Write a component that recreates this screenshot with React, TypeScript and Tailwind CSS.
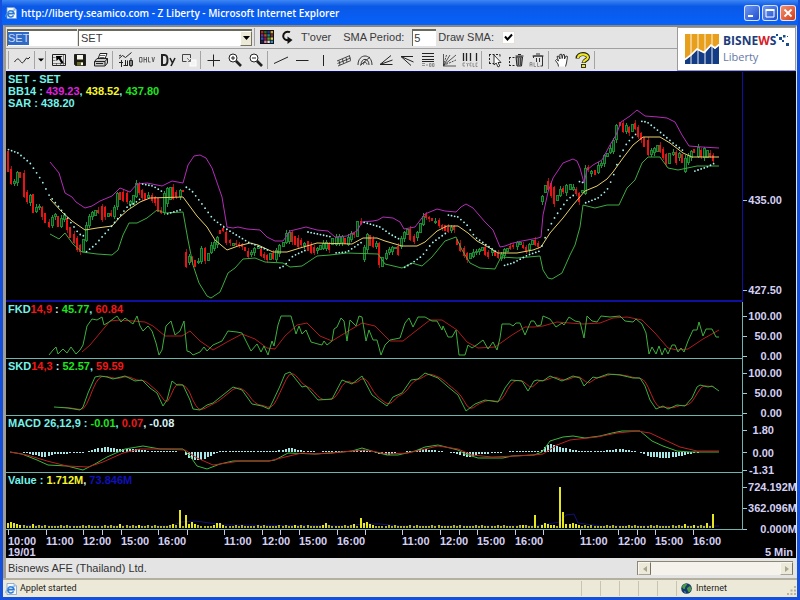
import { useState, type ReactNode } from "react";

type Point = [number, number];

type AxisLabel = { y: number; text: string };

type LegendPart = { text: string; tone: string };

const PLOT_LEFT = 6;
const PLOT_WIDTH = 736;
const BAR_START = 8.5;
const BAR_STEP = 3.12;
const BAR_COUNT = 227;

const CYAN = "text-[#74f2ea]";
const RED = "text-[#f01818]";
const GREEN = "text-[#1ee61e]";
const WHITE = "text-[#d8f4f4]";

// Each entry is direction + top-bottom of the candle body.
const CANDLES = `
r151-172 r169-184 g181-184 g172-183 r172-178 r173-197 r192-202 g195-203 r194-213 g207-212 g206-208 r207-217
r213-223 r222-227 g217-226 g214-217 r216-227 g218-227 g215-220 r218-230 r227-238 r234-243 r238-250 r245-252
g239-252 g225-241 g216-226 g212-217 g210-216 r210-213 r206-220 r207-217 g213-217 r213-216 g207-217 g193-207
r192-200 r192-201 r193-202 g201-205 g195-205 g183-197 r184-193 r190-198 r193-200 g195-198 r195-201 r197-203
r198-212 r210-213 g193-213 g188-204 g187-200 r187-199 r192-197 g190-197 r190-192 r252-267 g256-263 r257-262
r260-267 g261-263 g248-262 r248-261 g253-261 g245-253 g242-249 g237-245 r230-234 r228-231 r232-243 r240-243
g243-246 r243-245 r244-246 r244-247 r247-251 r251-257 g252-255 g248-253 g246-249 r249-256 r254-258 r255-260
g253-260 r253-259 g250-260 g245-254 g242-247 g233-243 g232-242 r232-242 r236-245 r238-247 r240-245 g243-246
r241-251 r245-253 r247-253 g248-251 g245-250 g243-249 g242-249 r243-250 g238-245 g237-245 g236-244 g236-243
r238-244 g237-245 g233-240 r233-235 g221-237 r221-224 g247-260 g234-250 r235-246 r239-247 g243-247 r243-265
g257-267 g253-259 g249-253 g247-252 g247-249 r246-255 g238-247 g232-239 g229-235 r229-240 r236-242 g232-238
g223-233 g216-225 r214-218 r217-219 r218-221 g221-223 r220-226 r225-228 r225-231 r227-232 g227-231 r226-230
r239-245 r243-251 r248-256 r253-260 g253-259 g252-257 g251-253 g249-252 g247-251 r247-255 r252-257 g250-253
r251-256 r253-258 g254-259 g249-256 g248-252 r246-249 r245-247 g242-247 g242-245 r245-248 r247-252 g244-250
g240-245 r240-245 r243-247 g196-202 g185-193 r181-190 r183-196 r187-204 g195-201 g189-196 r188-192 g185-193
g184-190 g187-190 r189-194 r193-202 g190-193 g168-194 r167-170 g171-174 r170-175 g165-173 g163-166 g155-164
g153-157 g148-153 g140-152 g125-140 r122-126 r123-132 g125-132 r127-133 g124-132 r123-129 r127-137 r133-140
r137-147 r140-155 g150-155 g148-153 g145-152 r145-152 r149-158 r154-164 g153-164 g152-155 r152-163 g153-158
r154-163 g158-172 g155-163 g151-158 r149-153 g147-157 r150-157 g148-158 g150-158 r153-157 r155-161`;

const UPPER_BAND =
  "50,162 59,173 65,193 72,197 76,202 85,208 92,206 100,201 112,196 120,188 130,192 137,184 147,183 162,186 172,181 183,183 188,165 194,156 200,155 206,158 212,168 222,197 227,227 233,228 238,227 247,229 260,230 267,237 275,241 283,241 290,231 306,227 317,230 328,231 335,237 347,236 357,231 362,222 373,221 378,220 383,217 393,218 400,222 404,229 415,227 425,214 437,209 445,211 456,212 461,207 466,204 473,208 485,222 493,230 500,247 505,246 513,243 522,241 538,238 541,237 543,215 548,192 553,178 563,163 573,159 577,161 580,168 584,183 587,170 593,165 602,160 610,145 616,135 621,122 630,116 637,110 645,116 658,117 667,118 675,122 682,135 689,146 702,147 719,148";
const MIDDLE_BAND =
  "50,199 62,212 72,221 85,230 97,228 112,226 120,217 128,210 140,202 150,198 183,197 197,216 207,227 215,240 227,250 238,246 250,243 258,245 273,252 287,252 300,248 317,243 352,244 363,238 377,238 385,241 402,246 417,246 425,242 437,231 447,226 458,226 468,233 477,241 488,247 498,253 517,253 533,250 541,247 550,233 563,218 573,205 585,191 597,186 607,179 613,172 623,158 633,145 643,137 660,137 670,143 683,153 692,157 719,157";
const LOWER_BAND =
  "50,234 59,239 65,233 73,244 82,252 97,254 112,255 118,250 123,235 129,223 137,223 147,218 157,210 165,213 183,212 188,240 193,265 199,283 207,296 211,298 220,292 223,285 228,273 235,268 243,259 255,258 265,262 283,263 290,267 302,266 317,256 330,255 347,253 378,254 385,264 402,268 412,263 422,266 432,257 445,241 456,237 462,250 470,263 480,268 495,269 501,257 517,258 540,256 543,270 548,278 552,279 562,273 570,255 575,245 580,227 583,205 595,208 607,205 619,205 627,188 635,180 642,163 648,157 660,157 668,168 678,170 697,166 719,166";

const SAR_RUNS = [
  "7,149 18,153 30,163 42,181 49,195 67,217 79,234 84,236",
  "86,252 95,245 110,228 120,216 128,206 135,203 140,199",
  "142,184 153,186 163,192",
  "167,214 183,209",
  "186,187 192,191 202,204 213,219 228,230 248,242 270,251",
  "277,269 284,266 293,256 306,250",
  "308,232 332,237",
  "333,253 347,252 362,242",
  "363,222 380,227 390,234 399,239",
  "402,269 412,263 422,256 432,243 446,233",
  "448,215 458,217 467,225 475,237 485,244 498,253",
  "502,266 513,263 528,255 540,251",
  "542,246 545,238 549,228 555,217 562,207 568,199 574,195",
  "577,181 585,183",
  "585,203 598,198 607,190 613,177 619,158 627,143 637,133",
  "639,121 647,122 660,132 673,143 685,152",
  "692,172 707,167 719,161",
];

const FKD_FAST =
  "49,355 53,350 56,347 58,354 63,349 67,353 71,347 76,354 80,350 83,345 87,326 92,319 97,320 102,317 104,325 109,322 117,316 121,322 125,318 133,324 137,316 140,326 143,331 148,326 152,331 156,343 159,355 162,350 166,326 171,321 175,335 180,331 184,321 187,351 190,352 193,355 200,352 204,347 207,351 213,345 222,341 228,331 237,332 242,333 247,343 251,351 257,344 261,352 264,346 268,355 272,341 274,346 278,325 281,316 291,316 296,334 299,326 302,334 306,330 311,342 318,344 322,345 324,341 327,345 332,341 334,329 337,327 341,318 344,321 347,341 350,320 356,326 359,316 362,317 366,341 369,330 373,340 377,340 381,355 385,345 390,340 400,338 405,323 409,318 413,327 418,317 425,317 432,321 437,321 442,330 443,326 448,337 452,337 456,330 459,355 465,355 468,345 472,348 478,344 483,340 488,349 493,342 497,350 500,338 502,324 510,324 513,326 516,323 520,323 525,335 531,321 534,321 537,326 541,325 543,316 550,319 556,327 562,323 564,325 569,317 575,321 580,322 584,338 587,316 592,321 597,322 601,316 610,317 620,316 625,321 633,322 636,319 642,324 646,333 649,354 652,347 656,354 659,346 662,355 665,348 668,354 672,345 675,345 678,352 681,348 684,352 688,341 693,330 697,330 699,322 703,336 706,329 712,329 716,337 719,337";
const FKD_SLOW =
  "82,352 90,345 100,333 110,321 120,320 133,321 145,322 153,326 165,336 182,336 190,331 200,341 213,350 227,342 242,334 255,339 267,348 275,349 285,336 297,325 307,323 320,336 332,341 345,333 362,323 375,326 390,341 403,341 417,330 430,320 442,320 457,330 467,342 478,348 495,347 512,335 525,327 534,327 543,326 557,322 583,324 600,323 613,318 627,317 642,320 655,333 668,348 677,350 688,349 703,339 719,330";
const SKD_FAST =
  "54,407 68,408 80,410 83,407 88,393 95,377 100,376 107,377 113,379 125,376 135,381 142,380 150,388 157,393 163,406 167,400 172,381 177,385 183,385 190,400 193,409 200,410 207,405 213,403 223,395 233,387 242,390 252,404 262,406 269,409 273,401 280,386 285,374 290,372 302,387 306,386 318,400 332,399 342,380 352,384 362,376 372,395 380,401 387,406 393,397 402,393 411,380 418,379 425,373 438,378 447,386 458,395 466,411 475,404 485,400 498,402 505,388 511,380 522,381 528,391 534,381 537,380 543,381 550,376 562,381 573,376 580,378 584,386 593,377 597,378 608,374 620,375 633,378 640,378 645,386 650,400 656,409 663,406 668,409 677,405 685,406 692,398 697,387 700,385 708,387 712,386 719,391";
const MACD_FAST =
  "10,452 22,454 37,460 48,465 67,466 83,470 95,464 107,457 125,449 143,446 160,449 183,449 190,456 197,466 207,469 220,464 233,461 269,461 275,460 288,453 315,454 332,453 352,451 362,448 375,452 387,455 398,455 415,451 425,447 438,445 458,450 465,454 478,458 503,458 512,456 534,455 542,452 550,441 563,437 573,436 585,438 600,436 612,433 622,431 640,431 652,441 663,446 677,451 690,452 719,452";
const MACD_SIGNAL =
  "10,452 27,455 47,461 67,466 88,467 103,462 123,453 140,449 160,449 185,450 197,458 213,465 227,463 240,461 269,461 285,457 302,453 315,454 342,452 365,450 388,454 408,453 425,449 438,446 458,449 472,455 492,457 515,456 534,455 543,454 557,445 570,440 597,437 617,433 637,431 650,433 667,441 680,447 697,451 719,451";
// x, height above (+) or below (-) the zero line
const MACD_HISTOGRAM =
  "20,0 30,-2 45,-5 55,-2 84,-1 88,1 105,5 120,3 140,3 150,1 170,1 184,0 188,-5 197,-9 207,-6 215,-2 222,1 262,1 275,1 283,2 291,4 298,2 310,1 318,0 330,1 350,1 365,2 372,0 387,-3 400,0 415,1 422,3 435,2 445,0 455,-1 466,-5 472,-5 480,-2 498,-1 508,0 515,1 541,1 546,6 552,8 560,5 570,3 580,1 600,1 620,3 635,1 643,-1 650,-5 668,-6 680,-4 695,-1 705,0 719,0";
const MACD_ZERO = 452;

const VALUE_BASE = 528;
const VALUE_AVERAGE =
  "8,525 50,526 170,526 182,522 195,521 210,523 225,525 350,526 362,524 380,524 400,526 535,526 560,522 566,515 574,514 578,523 600,526 719,526";
// bar index -> height
const VALUE_SPIKES: Record<number, number> = {
  0: 5, 1: 6, 2: 5, 3: 4, 4: 3, 8: 4, 36: 4, 42: 3, 53: 4, 55: 18, 57: 13, 58: 4, 59: 6, 60: 4, 66: 3, 67: 5,
  68: 5, 69: 3, 92: 3, 101: 3, 102: 5, 111: 4, 113: 10, 114: 5, 115: 6, 116: 4, 117: 3, 165: 3, 169: 13, 171: 3,
  172: 5, 173: 4, 174: 3, 175: 3, 177: 41, 178: 16, 179: 4, 180: 4, 181: 5, 182: 4, 183: 3, 217: 4, 220: 3,
  224: 5, 226: 14,
};

const TIME_TICKS: { x: number; text?: string }[] = [
  { x: 8, text: "10:00" },
  { x: 46, text: "11:00" },
  { x: 83, text: "12:00" },
  { x: 102 },
  { x: 121, text: "15:00" },
  { x: 158, text: "16:00" },
  { x: 187 },
  { x: 224, text: "11:00" },
  { x: 262, text: "12:00" },
  { x: 280 },
  { x: 299, text: "15:00" },
  { x: 337, text: "16:00" },
  { x: 365 },
  { x: 402, text: "11:00" },
  { x: 440, text: "12:00" },
  { x: 459 },
  { x: 477, text: "15:00" },
  { x: 515, text: "16:00" },
  { x: 543 },
  { x: 580, text: "11:00" },
  { x: 618, text: "12:00" },
  { x: 637 },
  { x: 655, text: "15:00" },
  { x: 693, text: "16:00" },
];

const BARS = Array.from({ length: BAR_COUNT }, (_, i) => BAR_START + i * BAR_STEP);

function parsePoints(points: string): Point[] {
  return points.split(" ").map((pair) => pair.split(",").map(Number) as Point);
}

// Linear interpolation along a polyline; null outside of its range.
function valueAt(points: Point[], x: number): number | null {
  for (let i = 1; i < points.length; i++) {
    const [x0, y0] = points[i - 1];
    const [x1, y1] = points[i];
    if (x >= x0 && x <= x1) return y0 + ((y1 - y0) * (x - x0)) / (x1 - x0);
  }
  return null;
}

// Three bar average of a line, sampled on every bar.
function smooth(points: string): string {
  const source = parsePoints(points);
  const out: string[] = [];
  BARS.forEach((x) => {
    const window = [x, x - BAR_STEP, x - BAR_STEP * 2].map((wx) => valueAt(source, wx));
    if (window.some((v) => v === null)) return;
    const sum = (window as number[]).reduce((a, b) => a + b, 0);
    out.push(`${x.toFixed(1)},${(sum / 3).toFixed(1)}`);
  });
  return out.join(" ");
}

function Line({ points, color }: { points: string; color: string }) {
  return (
    <polyline points={points} fill="none" stroke={color} strokeWidth="1" vectorEffect="non-scaling-stroke" />
  );
}

function Candles() {
  return (
    <g shapeRendering="crispEdges">
      {CANDLES.trim()
        .split(/\s+/)
        .map((entry, i) => {
          const up = entry[0] === "g";
          const [top, bottom] = entry.slice(1).split("-").map(Number);
          const x = Math.floor(BARS[i]);
          const wickTop = top - ((i * 7) % 4);
          const wickBottom = bottom + ((i * 5) % 4);
          return (
            <g key={i}>
              <rect x={x} y={wickTop} width="1" height={wickBottom - wickTop} fill={up ? "#1f9a3a" : "#a01414"} />
              {up ? (
                <>
                  <rect x={x - 1} y={top} width="3" height={bottom - top} fill="#1c8a34" />
                  <rect x={x} y={top + 1} width="1" height={Math.max(0, bottom - top - 2)} fill="#063a10" />
                </>
              ) : (
                <rect x={x - 1} y={top} width="2" height={bottom - top} fill="#e81414" />
              )}
            </g>
          );
        })}
    </g>
  );
}

function SarDots() {
  return (
    <g fill="#a8f4f0">
      {SAR_RUNS.map((run, r) => {
        const points = parsePoints(run);
        return BARS.map((x, i) => {
          const y = valueAt(points, x);
          return y === null ? null : <circle key={`${r}-${i}`} cx={x} cy={y} r="0.9" />;
        });
      })}
    </g>
  );
}

function Histogram() {
  const points = parsePoints(MACD_HISTOGRAM);
  return (
    <g fill="#a4e6e6" shapeRendering="crispEdges">
      {BARS.map((x, i) => {
        const h = valueAt(points, x);
        if (h === null || Math.abs(h) < 0.4) return null;
        const size = Math.max(1, Math.round(Math.abs(h)));
        return <rect key={i} x={Math.floor(x) - 1} width="2" y={h > 0 ? MACD_ZERO - size : MACD_ZERO} height={size} />;
      })}
    </g>
  );
}

function ValueBars() {
  return (
    <g shapeRendering="crispEdges">
      {BARS.map((x, i) => {
        const spike = VALUE_SPIKES[i];
        const h = spike ?? ((i * 11) % 7 > 4 ? 3 : 2);
        return (
          <rect
            key={i}
            x={Math.floor(x) - 1}
            y={VALUE_BASE - h}
            width="2"
            height={h}
            fill={spike ? "#e6e61e" : "#b4b428"}
          />
        );
      })}
    </g>
  );
}

type PanelProps = {
  top: number;
  height: number;
  border: number;
  className: string;
  frame: string;
  legend: LegendPart[][];
  axis: AxisLabel[];
  axisEdge: string;
  children: ReactNode;
};

function Panel({ top, height, border, className, frame, legend, axis, axisEdge, children }: PanelProps) {
  return (
    <section className={`flex ${className}`}>
      <div className={`relative flex-1 ${frame}`}>
        <svg
          className="absolute inset-0 h-full w-full"
          viewBox={`${PLOT_LEFT} ${top} ${PLOT_WIDTH} ${height - border}`}
          preserveAspectRatio="none"
          aria-hidden="true"
        >
          {children}
        </svg>
        <div className="relative px-[2px] pt-px">
          {legend.map((row, i) => (
            <p key={i} className="leading-3 whitespace-pre">
              {row.map((part, j) => (
                <span key={j} className={part.tone}>
                  {part.text}
                </span>
              ))}
            </p>
          ))}
        </div>
      </div>
      <div className="relative w-[53px]">
        {axis.map(({ y, text }) => (
          <div
            key={text}
            className="absolute inset-x-0 flex h-3 -translate-y-1/2 items-center overflow-x-clip leading-3"
            style={{ top: `${((y - top) / height) * 100}%` }}
          >
            <span className="h-px w-1 bg-[#9fc8d8]" />
            <span className={`absolute ${axisEdge}`}>{text}</span>
          </div>
        ))}
      </div>
    </section>
  );
}

function Chart() {
  const tealFrame = "border-r border-b border-[#6fb4ac]";
  return (
    <div className="flex flex-1 flex-col bg-black font-['Liberation_Sans',Arial,sans-serif] text-[11px] font-bold text-[#d4d0f4]">
      <Panel
        top={72}
        height={230}
        border={2}
        className="min-h-[230px] flex-1"
        frame="border-r border-b-2 border-[#1010a0]"
        axisEdge="right-[14px]"
        axis={[
          { y: 200, text: "435.00" },
          { y: 290, text: "427.50" },
        ]}
        legend={[
          [{ text: "SET - SET", tone: CYAN }],
          [
            { text: "BB14 : ", tone: CYAN },
            { text: "439.23", tone: "text-[#e020e0]" },
            { text: ", ", tone: CYAN },
            { text: "438.52", tone: "text-[#f6f62a]" },
            { text: ", ", tone: CYAN },
            { text: "437.80", tone: GREEN },
          ],
          [{ text: "SAR : 438.20", tone: CYAN }],
        ]}
      >
        <Candles />
        <Line points={UPPER_BAND} color="#b42cb8" />
        <Line points={MIDDLE_BAND} color="#e8d068" />
        <Line points={LOWER_BAND} color="#3cac40" />
        <SarDots />
      </Panel>
      <Panel
        top={302}
        height={57}
        border={1}
        className="h-[57px]"
        frame={tealFrame}
        axisEdge="right-[14px]"
        axis={[
          { y: 316, text: "100.00" },
          { y: 336, text: "50.00" },
          { y: 356, text: "0.00" },
        ]}
        legend={[
          [
            { text: "FKD", tone: CYAN },
            { text: "14,9", tone: RED },
            { text: " : ", tone: WHITE },
            { text: "45.77", tone: GREEN },
            { text: ", ", tone: CYAN },
            { text: "60.84", tone: RED },
          ],
        ]}
      >
        <Line points={FKD_SLOW} color="#b01c1c" />
        <Line points={FKD_FAST} color="#3cb03c" />
      </Panel>
      <Panel
        top={359}
        height={57}
        border={1}
        className="h-[57px]"
        frame={tealFrame}
        axisEdge="right-[14px]"
        axis={[
          { y: 373, text: "100.00" },
          { y: 393, text: "50.00" },
          { y: 413, text: "0.00" },
        ]}
        legend={[
          [
            { text: "SKD", tone: CYAN },
            { text: "14,3", tone: RED },
            { text: " : ", tone: WHITE },
            { text: "52.57", tone: GREEN },
            { text: ", ", tone: CYAN },
            { text: "59.59", tone: RED },
          ],
        ]}
      >
        <Line points={smooth(SKD_FAST)} color="#c02020" />
        <Line points={SKD_FAST} color="#3cb03c" />
      </Panel>
      <Panel
        top={416}
        height={57}
        border={1}
        className="h-[57px]"
        frame={tealFrame}
        axisEdge="right-[22px]"
        axis={[
          { y: 430, text: "1.80" },
          { y: 453, text: "0.00" },
          { y: 470, text: "-1.31" },
        ]}
        legend={[
          [
            { text: "MACD 26,12,9 : ", tone: CYAN },
            { text: "-0.01", tone: GREEN },
            { text: ", ", tone: CYAN },
            { text: "0.07", tone: RED },
            { text: ", -0.08", tone: WHITE },
          ],
        ]}
      >
        <Histogram />
        <Line points={MACD_FAST} color="#3cb83c" />
        <Line points={MACD_SIGNAL} color="#c02020" />
      </Panel>
      <Panel
        top={473}
        height={57}
        border={1}
        className="h-[57px]"
        frame={tealFrame}
        axisEdge="-right-px"
        axis={[
          { y: 487, text: "724.192M" },
          { y: 508, text: "362.096M" },
          { y: 529, text: "0.000M" },
        ]}
        legend={[
          [
            { text: "Value : ", tone: CYAN },
            { text: "1.712M", tone: "text-[#f6f62a]" },
            { text: ", ", tone: WHITE },
            { text: "73.846M", tone: "text-[#1010b8]" },
          ],
        ]}
      >
        <Line points={VALUE_AVERAGE} color="#10107a" />
        <ValueBars />
      </Panel>
      <div className="flex h-7">
        <div className="relative flex-1">
          {TIME_TICKS.map(({ x, text }) => (
            <div key={x} className="absolute top-0" style={{ left: `${((x - PLOT_LEFT) / (PLOT_WIDTH + 1)) * 100}%` }}>
              <span className="block h-[5px] w-px bg-[#c8c8e8]" />
              {text && <span className="block leading-3">{text}</span>}
            </div>
          ))}
          <span className="absolute bottom-0 left-[2px] leading-3">19/01</span>
        </div>
        <span className="flex w-[53px] items-end justify-end pr-[3px] leading-3 whitespace-nowrap">5 Min</span>
      </div>
    </div>
  );
}

function PageIcon() {
  return (
    <svg className="h-3 w-3 shrink-0" viewBox="0 0 12 12" aria-hidden="true">
      <path d="M2 0.5h7l2.5 2.5v8.5H2z" fill="#f4f8ff" stroke="#7f9dc8" strokeWidth="0.8" />
      <path d="M9 0.5V3h2.5" fill="#c4d6f0" stroke="#7f9dc8" strokeWidth="0.6" />
      <path d="M8.6 8.4A3.1 3.1 0 1 1 9 6.6H3.2" fill="none" stroke="#2a78d4" strokeWidth="1.6" />
      <path d="M0.6 9.8C0.4 6.6 5.6 2.6 9.6 3.4" fill="none" stroke="#5aa8ec" strokeWidth="0.8" />
    </svg>
  );
}

function TitleBar() {
  return (
    <header className="flex h-[25px] items-center gap-1 bg-linear-to-b from-[#3c86f4] via-[#0a58e6] via-25% to-[#0662fa] pr-[2px] pl-[3px]">
      <PageIcon />
      <h1 className="flex-1 truncate pt-px font-['Open_Sans',Tahoma,sans-serif] text-[10px] leading-4 font-semibold text-white">
        http://liberty.seamico.com - Z Liberty - Microsoft Internet Explorer
      </h1>
      <div className="flex gap-[2px] pt-px">
        <button type="button" aria-label="Minimize" className="h-4 w-4 rounded-[3px] border border-white/80 bg-linear-to-br from-[#6e96f0] to-[#1e4cd0]">
          <svg viewBox="0 0 14 14" className="h-full w-full">
            <rect x="3" y="9" width="5" height="2" fill="#fff" />
          </svg>
        </button>
        <button type="button" aria-label="Maximize" className="h-4 w-4 rounded-[3px] border border-white/80 bg-linear-to-br from-[#6e96f0] to-[#1e4cd0]">
          <svg viewBox="0 0 14 14" className="h-full w-full">
            <path d="M3 4.5h8v6.5H3z" fill="none" stroke="#fff" />
            <rect x="2.5" y="3" width="9" height="2" fill="#fff" />
          </svg>
        </button>
        <button type="button" aria-label="Close" className="h-4 w-4 rounded-[3px] border border-white/80 bg-linear-to-br from-[#f09070] to-[#d03810]">
          <svg viewBox="0 0 14 14" className="h-full w-full">
            <path d="M3.5 3.5l7 7M10.5 3.5l-7 7" stroke="#fff" strokeWidth="1.8" />
          </svg>
        </button>
      </div>
    </header>
  );
}

const PALETTE = [
  "#c02020", "#207020", "#2030b0", "#d0a020",
  "#7030a0", "#c05020", "#109090", "#803030",
  "#3050c0", "#a01060", "#60a030", "#e0d040",
  "#202060", "#e080a0", "#e0e0e0", "#3090d0",
];

function QuoteBar() {
  const [symbol, setSymbol] = useState("SET");
  const [period, setPeriod] = useState("5");
  const [drawSma, setDrawSma] = useState(true);

  return (
    <form className="flex h-[22px] items-center border-b border-[#a0a0a0] pb-px pl-px text-[11px] text-[#3a3a3a]">
      <div className="flex h-[17px] w-[70px] items-center border-t-2 border-l border-[#6a6a5c] bg-white">
        <input
          aria-label="Symbol"
          value={symbol}
          onChange={(e) => setSymbol(e.target.value)}
          className="h-[13px] field-sizing-content bg-[#316ac5] text-[11px] leading-3 text-[#c8dcff] outline-none"
        />
      </div>
      <div className="relative ml-px h-[17px] w-[174px] border-t-2 border-l border-[#6a6a5c] bg-white">
        <select aria-label="Market" className="block h-full w-full appearance-none bg-transparent pl-[2px] text-[11px] leading-3 outline-none">
          <option>SET</option>
        </select>
        <span className="pointer-events-none absolute inset-y-0 right-0 flex w-3 items-center justify-center border border-t-[#fff] border-r-[#77735f] border-b-[#77735f] border-l-[#fff] bg-[#ece9d8]">
          <svg viewBox="0 0 7 4" className="h-1 w-[7px]">
            <path d="M0 0h7L3.5 4z" fill="#000" />
          </svg>
        </span>
      </div>
      <span className="ml-[2px] h-[18px] w-px bg-[#a0a0a0]" />
      <button type="button" aria-label="Colours" className="ml-[2px] flex h-5 w-5 items-center justify-center">
        <svg viewBox="0 0 14 14" className="h-[14px] w-[14px]">
          <rect width="14" height="14" fill="#111" />
          {PALETTE.map((color, i) => (
            <rect key={i} x={1 + (i % 4) * 3.2} y={1 + Math.floor(i / 4) * 3.2} width="2.4" height="2.4" fill={color} />
          ))}
        </svg>
      </button>
      <button type="button" aria-label="Reload" className="flex h-5 w-5 items-center justify-center">
        <svg viewBox="0 0 14 14" className="h-[14px] w-[14px]">
          <path d="M10 2.2C6.500 0.600 3.200 2.800 3.200 6c0 2.800 2.200 4.400 5.800 4.200" fill="none" stroke="#111" strokeWidth="2" />
          <path d="M7.500 6.500L12.500 10l-5 4z" fill="#111" />
        </svg>
      </button>
      <span className="ml-1">T&apos;over</span>
      <label htmlFor="period" className="ml-3">
        SMA Period:
      </label>
      <input
        id="period"
        value={period}
        onChange={(e) => setPeriod(e.target.value)}
        className="ml-2 h-[17px] w-6 border-t-2 border-l border-[#6a6a5c] bg-white pl-px text-[11px] leading-3 outline-none"
      />
      <label htmlFor="draw-sma" className="ml-[2px]">
        Draw SMA:
      </label>
      <span className="relative ml-2 h-[13px] w-[13px]">
        <input
          id="draw-sma"
          type="checkbox"
          checked={drawSma}
          onChange={(e) => setDrawSma(e.target.checked)}
          className="peer block h-full w-full appearance-none border border-[#e4e0d8] bg-white"
        />
        <svg viewBox="0 0 13 13" className="pointer-events-none absolute inset-0 hidden peer-checked:block">
          <path d="M3 5.5L5.5 8.5L10 3.5" fill="none" stroke="#000" strokeWidth="2" />
        </svg>
      </span>
    </form>
  );
}

type Tool = { name: string; icon: ReactNode };

const MAGNIFIER = (
  <>
    <circle cx="6" cy="6" r="4" fill="#fff" />
    <path d="M9 9l5 5" strokeWidth="2.6" />
  </>
);

const TOOL_GROUPS: Tool[][] = [
  [
    {
      name: "Pointer",
      icon: (
        <>
          <path d="M1.5 2.5h13v11h-13z" />
          <path d="M1.5 5.5h3M1.5 8.5h3M1.5 11.5h13M5.5 11v2.5M9.5 11v2.5M12.5 2.5v11" strokeWidth="0.5" />
          <path d="M5 4h6.5l-2 1.8 3 4.700-2 1.200-2.800-4.700L5.500 9z" fill="#000" stroke="none" />
        </>
      ),
    },
    {
      name: "Save",
      icon: (
        <>
          <path d="M2.5 2.5h11v11h-10l-1-1z" fill="#1c1c10" />
          <rect x="5" y="3" width="6" height="4.500" fill="#f4f4e8" stroke="none" />
          <rect x="5" y="10" width="6" height="3.500" fill="#6a6a2a" stroke="none" />
          <rect x="9" y="10.500" width="2" height="2.500" fill="#fff" stroke="none" />
        </>
      ),
    },
    {
      name: "Print",
      icon: (
        <>
          <path d="M5 7l2-5.500h7L12 7" fill="#fff" />
          <path d="M7 3.500h5M6.500 5.500h5" strokeWidth="0.7" />
          <path d="M1.500 9.500L4 6.500h10.500v4.500l-2.500 3H1.500z" fill="#c8c8c8" />
          <path d="M1.500 9.500H12v4M12 9.500l2.500-3M3 11.500h7" />
        </>
      ),
    },
  ],
  [
    {
      name: "Indicators",
      icon: (
        <>
          <path d="M1 6.500l3.500-3 3 2 6-5M1 4l2-1" />
          <path d="M1 10.500h4M3.500 8v7M7.500 8v6M9.500 14V8.500M11.500 8.500h3v5h-3zM5.500 13.500h4M13 6v9" />
        </>
      ),
    },
    {
      name: "OHLV",
      icon: (
        <path
          d="M0.500 5.500h2.500v4.500H0.500zM5 5v5.500M7.500 5v5.500M5 7.500h2.500M9.500 5v5h2M13 5l1.200 5 1.300-5"
          stroke="#555"
          strokeWidth="0.9"
        />
      ),
    },
    {
      name: "Daily",
      icon: (
        <>
          <path d="M2 3v10h2.500c4 0 4-10 0-10z" strokeWidth="2" />
          <path d="M10 6l2.500 5M15 6l-4 8" strokeWidth="1.600" />
        </>
      ),
    },
    {
      name: "Windows",
      icon: (
        <>
          <rect x="9" y="8" width="6" height="6" fill="#f4f4f4" stroke="#fff" />
          <path d="M9.500 6V2.500h-8v7h4" stroke="#444" />
          <path d="M6 6l3.500 3.500M9.500 7V9.500H7" stroke="#777" />
        </>
      ),
    },
  ],
  [
    { name: "Crosshair", icon: <path d="M7.5 2.500v12M1.500 8.500h12.500" /> },
    {
      name: "Zoom in",
      icon: (
        <>
          {MAGNIFIER}
          <path d="M4 6h4M6 4v4" />
        </>
      ),
    },
    {
      name: "Zoom out",
      icon: (
        <>
          {MAGNIFIER}
          <path d="M4 6h4" />
        </>
      ),
    },
  ],
  [
    { name: "Trend line", icon: <path d="M1 11.500L15 5" /> },
    { name: "Horizontal line", icon: <path d="M2 8.500h12.500" /> },
    { name: "Vertical line", icon: <path d="M8.500 3v11" /> },
    {
      name: "Channel",
      icon: <path d="M1 9L14 3.500M2 14L15 8.500M1.500 11.500L14.500 6M3 8.500l1 4.500M6.500 7l1 4.500M10 5.500l1 4.500M13.500 4l1 4" strokeWidth="0.8" />,
    },
    {
      name: "Fibonacci arcs",
      icon: <path d="M1 13C1 1 15 1 15 13M4 13c0-7.500 8-7.500 8 0M6.500 12.500c0-3 3-3 3.500 0M3 13.500L13 5" strokeWidth="0.9" />,
    },
    { name: "Fan up", icon: <path d="M13 3.500L2 12.500h12.500M2 12.500L14.500 8" /> },
    { name: "Fan down", icon: <path d="M14 4.500H2L14.500 10M2 4.500L12 13.500" /> },
    {
      name: "Fibonacci retracement",
      icon: (
        <>
          <path d="M2 1.500h12M2 4.500h12M2 7.500h12M2 9.500h12" />
          <path d="M2 11.500h3M2 13.500h3M6 13h2M9.500 11.500h1.500v3H9.500zM12.500 11.500H14v3h-1.500z" stroke="#888" strokeWidth="0.9" />
        </>
      ),
    },
    {
      name: "Gann fan",
      icon: (
        <>
          <path d="M2.500 14V2M2 14h13M2.500 13.500L9 3M2.500 13.500L15 3" stroke="#555" />
          <path d="M2.500 13.500L5.500 3M2.500 13.500L15 8" strokeWidth="0.8" strokeDasharray="2 1" />
        </>
      ),
    },
    {
      name: "Cycle lines",
      icon: (
        <>
          <path d="M1.500 1v8M4.500 1v8M8.500 1v8M14.500 1v8" strokeWidth="1.300" />
          <path d="M3 11H1v3h2M4.500 11l1 1.500 1-1.500M5.500 12.500V14.500M9.500 11H8v3h1.500M11 11v3.500h1.500M15.500 11H14v3.500h1.500" stroke="#888" strokeWidth="0.9" />
        </>
      ),
    },
  ],
  [
    {
      name: "Select object",
      icon: (
        <>
          <path d="M2 2.500h11M2.500 2.500v9M2 11.500h5M13 2.500v3" strokeDasharray="2 1.500" />
          <path d="M7 3v10l2.200-2 1.800 4 1.800-1-1.800-3.500h3z" fill="#fff" strokeWidth="0.9" />
        </>
      ),
    },
    {
      name: "Delete object",
      icon: (
        <>
          <path d="M1 5.500h6M1.500 5.500v8M1 13.500h6" strokeDasharray="2 1.500" />
          <path d="M8 5h6.500l-1 9H9zM7.500 4h8M10 2.500h3" fill="#999" />
          <path d="M10.500 6v7M12.500 6v7" strokeWidth="0.7" />
        </>
      ),
    },
    {
      name: "Delete all",
      icon: (
        <>
          <path d="M4.500 6v-2h9v10h-2M3.500 4h11M7 2h4M7.500 6v4M10.500 6v4" stroke="#333" />
          <path d="M1 14.500v-4h2v4M1 12.500h2M5 10.500v4h2M8.500 10.500v4h2" stroke="#888" strokeWidth="0.9" />
        </>
      ),
    },
  ],
  [
    {
      name: "Pan",
      icon: (
        <path
          d="M4.500 14.500L4 12 1.500 8.500 2.500 7.500 4.500 9 3 4.500 4.500 4 6 7 5.800 2.500 7.500 2.200 8.200 6.500 9 2.500 10.500 2.800 10.500 7 12 4 13.500 4.500 12.500 11l-1 3.500"
          fill="#fff"
          strokeWidth="0.9"
        />
      ),
    },
    {
      name: "Help",
      icon: (
        <>
          <path d="M2.500 6.500C2.500 0.500 13.300 1 13 5.500c0 2.500-4.500 2.500-4.500 5.500" strokeWidth="4" stroke="#222" />
          <path d="M3 6C3 1 13.200 1.500 12.900 5.500c0 2.500-4.400 2.500-4.400 5" strokeWidth="2.200" stroke="#f0e81c" />
          <rect x="6.500" y="12.500" width="4" height="3" fill="#f0e81c" stroke="#222" strokeWidth="0.9" />
        </>
      ),
    },
  ],
];

function Separator() {
  return <span className="mr-[2px] ml-px h-[18px] w-px bg-[#a4a4a4]" />;
}

function Toolbar() {
  return (
    <div role="toolbar" aria-label="Chart tools" className="flex h-[22px] items-center pl-px">
      <Separator />
      <button type="button" aria-label="Chart style" className="flex h-5 w-[22px] items-center justify-center">
        <svg viewBox="0 0 16 16" className="h-4 w-4" fill="none" stroke="#222">
          <path d="M0.5 10c2-3 3.500-4 5-2s2.500 4 4 2l3-4 1.500 1 2-2" />
        </svg>
      </button>
      <Separator />
      <button type="button" aria-label="More chart styles" className="flex h-5 w-[7px] items-center justify-center">
        <svg viewBox="0 0 6 4" className="h-1 w-[6px]">
          <path d="M0 0.5h6L3 3.500z" fill="#000" />
        </svg>
      </button>
      {TOOL_GROUPS.map((group, i) => (
        <div key={i} className="flex items-center">
          <Separator />
          {group.map((tool) => (
            <button key={tool.name} type="button" aria-label={tool.name} className="flex h-5 w-[21px] items-center justify-center">
              <svg viewBox="0 0 16 16" className="h-4 w-4" fill="none" stroke="#222">
                {tool.icon}
              </svg>
            </button>
          ))}
        </div>
      ))}
      <Separator />
    </div>
  );
}

function Logo() {
  return (
    <div className="relative flex w-[119px] items-center gap-1 border border-[#9a9a9a] bg-white pl-[7px]">
      <svg viewBox="0 0 34 30" className="h-[30px] w-[34px] shrink-0" aria-hidden="true">
        <path d="M0 0h34v10l-4 3-4-2-6 7-8-2-6 7-6 4z" fill="#e8a01c" />
        <path d="M0 30v-4l6-4 6-6 8 3 6-7 4 3 4-3v18z" fill="#143c84" />
        <path d="M0 25.500L6 21l6-6 7 3.500L26 11l4 3 4-3.500" fill="none" stroke="#fff" strokeWidth="1.600" />
        <path d="M6 0v30M13 0v30M20 0v30M27 0v30" stroke="#fff" strokeWidth="0.9" />
      </svg>
      <div className="font-['Open_Sans',sans-serif]">
        <p className="text-[12px] leading-4 font-bold text-[#1c3c7c]">
          BISNE<span className="text-[#d82028]">W</span>S
        </p>
        <p className="text-[11px] leading-4 text-[#6478a8]">Liberty</p>
      </div>
      <svg viewBox="0 0 14 14" className="absolute top-[5px] right-[5px] h-[14px] w-[14px]" aria-hidden="true">
        <path d="M0 1h2v2H0zM3 4h3v3H3zM7 2h2.500v2.500H7zM6 7h2v2H6zM11 3h1v1h-1zM10 10h3v3h-3z" fill="#1c4c8c" />
      </svg>
    </div>
  );
}

function AppletFooter() {
  return (
    <div className="flex h-5 items-center justify-between bg-[#e4e4e4] pr-[3px] pl-[2px] text-[11px] text-[#333]">
      <p>Bisnews AFE (Thailand) Ltd.</p>
      <div className="flex h-[14px] w-[156px] border-t border-l border-[#8a8776] bg-[#f4f2ea]">
        <button type="button" aria-label="Scroll left" className="flex w-[13px] items-center justify-center border border-[#f8f6ee] border-r-[#77735f] border-b-[#a8a594] bg-[#ece9d8]">
          <svg viewBox="0 0 4 6" className="h-[6px] w-1">
            <path d="M4 0v6L0 3z" fill="#a8a594" />
          </svg>
        </button>
        <span className="flex-1" />
        <button type="button" aria-label="Scroll right" className="flex w-[13px] items-center justify-center border border-[#f8f6ee] border-r-[#77735f] border-b-[#a8a594] bg-[#ece9d8]">
          <svg viewBox="0 0 4 6" className="h-[6px] w-1">
            <path d="M0 0v6l4-3z" fill="#a8a594" />
          </svg>
        </button>
      </div>
    </div>
  );
}

function StatusBar() {
  return (
    <footer className="flex h-[17px] items-center bg-[#ece9d8] pl-[2px] font-['Roboto',Tahoma,sans-serif] text-[9px] text-[#222]">
      <PageIcon />
      <p className="ml-[3px] flex-1">Applet started</p>
      {[0, 1, 2, 3, 4].map((cell) => (
        <span key={cell} className="h-[15px] w-[19px] border-l border-[#c8c4b0]" />
      ))}
      <div className="flex h-[15px] w-[121px] items-center gap-1 border-l border-[#c8c4b0] pl-1">
        <svg viewBox="0 0 11 11" className="h-[11px] w-[11px]" aria-hidden="true">
          <circle cx="5.5" cy="5.5" r="5.3" fill="#14386c" />
          <path d="M1 4c1-3 4-3.500 5-3 0 2-2 2-2 4s-2 1-3-1zM6 5l3-2c2 3 1 5-1 6.500C7 8 6 7 6 5z" fill="#4c9c40" />
          <path d="M3 8l2 1-1 1z" fill="#6ab0e8" />
        </svg>
        <span className="flex-1">Internet</span>
        <svg viewBox="0 0 11 11" className="h-[11px] w-[11px] self-end" fill="#b8b4a0" aria-hidden="true">
          <path d="M8 1h2v2H8zM8 4.500h2v2H8zM8 8h2v2H8zM4.500 4.500h2v2h-2zM4.500 8h2v2h-2zM1 8h2v2H1z" />
        </svg>
      </div>
    </footer>
  );
}

export default function App() {
  return (
    <div className="flex min-h-screen flex-col bg-[#1450dc] font-['Liberation_Sans',Arial,sans-serif]">
      <div className="px-[2px]">
        <TitleBar />
      </div>
      <main className="mx-[3px] flex flex-1 flex-col border-t-2 border-r border-l-[3px] border-t-[#8a887c] border-r-[#dce4f4] border-l-[#a09c90]">
        <div className="flex h-[45px] border-b border-[#000060] bg-[#e4e4e4]">
          <div className="min-w-0 flex-1">
            <QuoteBar />
            <Toolbar />
          </div>
          <Logo />
        </div>
        <Chart />
        <AppletFooter />
      </main>
      <div className="mx-[3px] mb-[3px] border-t-2 border-[#b4b0a0]">
        <StatusBar />
      </div>
    </div>
  );
}
